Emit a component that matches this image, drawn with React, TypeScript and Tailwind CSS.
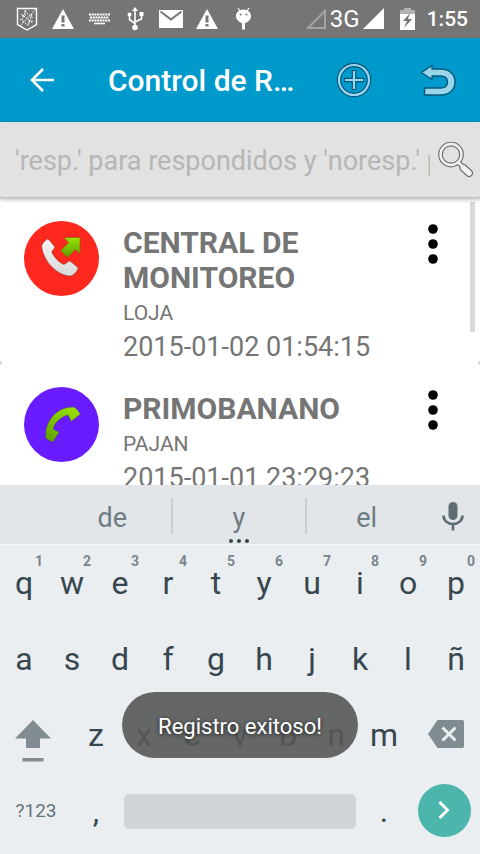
import React from "react";

const roboto = "font-['Roboto','Noto_Sans',sans-serif]";

function ShieldIcon() {
  return (
    <svg width="22" height="24" viewBox="0 0 22 24" fill="none" stroke="#fff" aria-hidden="true">
      <path d="M1.500 1.500h19v16L11 23l-9.500-5.500z" strokeWidth="1.400" />
      <path d="M5 7l12 9M8 4l9 7M4 12l8 6M20 2L4 19M10 3L6 13M16 7l-4 12M6 9l4-1M12 15l5-1" strokeWidth="1" strokeDasharray="2 1" />
    </svg>
  );
}

function WarningIcon() {
  return (
    <svg width="24" height="22" viewBox="0 0 24 22" aria-hidden="true">
      <path d="M12 1L23 21H1z" fill="#fff" />
      <path d="M10.500 7.500h3v7h-3zM10.500 16h3v2.500h-3z" fill="#757575" />
    </svg>
  );
}

function KeyboardIcon() {
  return (
    <svg width="21" height="12" viewBox="0 0 21 12" stroke="#fff" aria-hidden="true">
      <path d="M0 1.500h21M0 7.500h21" strokeWidth="2" strokeDasharray="2 0.700" />
      <path d="M1 4.500h19" strokeWidth="2" strokeDasharray="2 0.700" />
      <path d="M5 10.500h11" strokeWidth="1.600" />
    </svg>
  );
}

function UsbIcon() {
  return (
    <svg width="17" height="24" viewBox="0 0 17 24" aria-hidden="true">
      <path d="M8 3v17M2.500 8v4.500L8 16.500M14.500 8v4L8 15" fill="none" stroke="#fff" strokeWidth="1.600" />
      <path d="M8 0l3 4H5zM12.500 5h4v4h-4z" fill="#fff" />
      <circle cx="2.500" cy="7.500" r="2" fill="#fff" />
      <circle cx="8" cy="20.500" r="2.800" fill="#fff" />
    </svg>
  );
}

function MailIcon() {
  return (
    <svg width="24" height="18" viewBox="0 0 24 18" aria-hidden="true">
      <path d="M0 0h24v18H0z" fill="#fff" />
      <path d="M1.500 1.500L12 9.500l10.500-8" fill="none" stroke="#757575" strokeWidth="2" />
    </svg>
  );
}

function AndroidIcon() {
  return (
    <svg width="17" height="24" viewBox="0 0 17 24" aria-hidden="true">
      <path d="M3 1l2 3M14 1l-2 3" stroke="#fff" strokeWidth="1.200" />
      <path d="M8.500 2.500c4.500 0 7.500 3 7.500 6.500 0 4-3.500 6.500-6 7v6.500h-3V16C4.500 15.500 1 13 1 9c0-3.500 3-6.500 7.500-6.500z" fill="#fff" />
      <circle cx="5.500" cy="7.500" r="1" fill="#757575" />
      <circle cx="11.500" cy="7.500" r="1" fill="#757575" />
    </svg>
  );
}

function StatusBar() {
  return (
    <div className="flex h-[38px] shrink-0 items-center justify-between bg-[#757575] pl-[9px] pr-3 text-white">
      <div className="flex">
        {[ShieldIcon, WarningIcon, KeyboardIcon, UsbIcon, MailIcon, WarningIcon, AndroidIcon].map((Icon, i) => (
          <span key={i} className="flex w-9 items-center justify-center">
            <Icon />
          </span>
        ))}
      </div>
      <div className="flex items-center">
        <svg width="22" height="22" viewBox="0 0 22 22" aria-hidden="true">
          <path d="M20 3v17H3z" fill="none" stroke="#a3a3a3" strokeWidth="2" />
        </svg>
        <span className="px-[3px] text-2xl leading-6">3G</span>
        <svg width="21" height="22" viewBox="0 0 21 22" aria-hidden="true">
          <path d="M21 0v21H0z" fill="#fff" />
        </svg>
        <svg className="mx-3 ml-4" width="15" height="22" viewBox="0 0 15 22" aria-hidden="true">
          <path d="M4 0h7v2h4v4H0V2h4z" fill="#b3b3b3" />
          <path d="M0 6h15v16H0z" fill="#fff" />
          <path d="M10 5L3 13h4l-3 7 8-9H8z" fill="#757575" />
        </svg>
        <span className="text-[21px] leading-6 font-medium">1:55</span>
      </div>
    </div>
  );
}

function Toolbar() {
  return (
    <header className="flex h-[84px] shrink-0 items-center bg-[#0099cc] text-white">
      <button type="button" aria-label="Atrás" className="flex h-full w-[84px] items-center justify-center">
        <svg width="24" height="24" viewBox="0 0 24 24" fill="none" stroke="#fff" strokeWidth="2.600">
          <path d="M24 12H2M13 1L2 12l11 11" />
        </svg>
      </button>
      <h1 className="min-w-0 flex-1 truncate pt-0.5 pl-6 text-3xl font-medium">Control de R…</h1>
      <button type="button" aria-label="Agregar" className="flex h-full w-[84px] items-center justify-center">
        <svg width="36" height="36" viewBox="0 0 36 36" fill="none">
          <circle cx="18" cy="18" r="15" stroke="#07577a" strokeWidth="4.600" />
          <circle cx="18" cy="18" r="15" stroke="#99d6eb" strokeWidth="2.200" />
          <path d="M18 8v20M8 18h20" stroke="#07577a" strokeWidth="4.600" />
          <path d="M18 9v18M9 18h18" stroke="#99d6eb" strokeWidth="2.200" />
        </svg>
      </button>
      <button type="button" aria-label="Deshacer" className="flex h-full w-[84px] items-center justify-center">
        <svg width="36" height="32" viewBox="0 0 36 32">
          <path
            d="M1.500 8.500L12 1.500V5h8.500c8.500 0 14.500 5 14.500 13s-6 13-14.500 13h-16v-7h16c4.500 0 7-2.500 7-6s-2.500-6-7-6H12v3.500z"
            fill="#99d6eb"
            stroke="#07577a"
            strokeWidth="1.400"
            strokeLinejoin="round"
          />
        </svg>
      </button>
    </header>
  );
}

function SearchBar() {
  return (
    <form
      className="z-10 flex h-[75px] shrink-0 items-center gap-2 bg-[#e2e2e2] pr-1.5 pl-[15px] shadow-[0_2px_5px_rgba(0,0,0,0.35)]"
      onSubmit={(e) => e.preventDefault()}
    >
      <input
        type="text"
        aria-label="Buscar"
        placeholder="'resp.' para respondidos y 'noresp.' para no respondidos"
        className="h-full min-w-0 flex-1 bg-transparent pt-0.5 text-[27px] text-[#757575] outline-none placeholder:text-[#b6b6b6]"
      />
      <button type="submit" aria-label="Buscar">
        <svg width="36" height="36" viewBox="0 0 36 36" fill="none">
          <path d="M20 20l5 5" stroke="#707070" strokeWidth="5" />
          <path d="M25.500 26l5.500 5" stroke="#707070" strokeWidth="8" strokeLinecap="round" />
          <circle cx="13" cy="12.500" r="10.500" stroke="#707070" strokeWidth="4.800" />
          <circle cx="13" cy="12.500" r="10.500" stroke="#f2f2f2" strokeWidth="2.400" />
          <path d="M20.500 20.500l4 4" stroke="#f2f2f2" strokeWidth="2.600" />
          <path d="M25.500 26l5.500 5" stroke="#f2f2f2" strokeWidth="5.600" strokeLinecap="round" />
        </svg>
      </button>
    </form>
  );
}

function OutgoingCall() {
  return (
    <svg width="75" height="75" viewBox="0 0 75 75" className="shrink-0" aria-hidden="true">
      <defs>
        <linearGradient id="handset" x1="0" y1="0" x2="0" y2="1">
          <stop offset="0" stopColor="#f5f5f5" />
          <stop offset="1" stopColor="#d9d9d9" />
        </linearGradient>
        <linearGradient id="arrow" x1="0" y1="0" x2="0" y2="1">
          <stop offset="0" stopColor="#99e600" />
          <stop offset="1" stopColor="#5c9900" />
        </linearGradient>
      </defs>
      <circle cx="37.500" cy="37.500" r="37.500" fill="#ff281e" />
      <path
        d="M17.700 24.500C18.500 22 22 18.500 24 17.800L30.700 25.500C31 28 27.500 29 28 31.500C30 36 35 41.500 39.500 43.300C42 43.500 43.500 40 46 40L54 46.500C54.500 49 50 54.500 46.500 55C40 55.500 31 50 26 44C21 38 17.500 30 17.700 24.500Z"
        fill="url(#handset)"
        stroke="#8f2b26"
        strokeWidth="0.600"
      />
      <path d="M40 16.500h16V33l-4.500-4.500-8.200 8-6.800-6.800 8-8z" fill="url(#arrow)" stroke="#8a4a00" strokeWidth="0.500" />
    </svg>
  );
}

function AnsweredCall() {
  return (
    <svg width="75" height="75" viewBox="0 0 75 75" className="shrink-0" aria-hidden="true">
      <defs>
        <linearGradient id="answered" x1="0.800" y1="0" x2="0.200" y2="1">
          <stop offset="0" stopColor="#99e000" />
          <stop offset="0.500" stopColor="#80c400" />
          <stop offset="1" stopColor="#629e00" />
        </linearGradient>
      </defs>
      <circle cx="37.500" cy="37.500" r="37.500" fill="#681cff" />
      <path
        d="M21.500 50.500C20.500 43 24 34 29.500 28C35 22.500 42.500 19.500 50 20C51.500 20.500 56.500 25.500 56.200 27.500L47.700 34.200C45.500 33.500 45.500 29 43.500 28.300C37 30 31 35.500 29.300 41.500C30 43.500 34.500 43.500 35.200 45.500L29 55C26.500 55 22.500 52.500 21.500 50.500Z"
        fill="url(#answered)"
        stroke="#40309a"
        strokeWidth="0.600"
      />
    </svg>
  );
}

type Entry = { name: string; place: string; date: string; Icon: () => React.ReactElement };

const entries: Entry[] = [
  { name: "CENTRAL DE MONITOREO", place: "LOJA", date: "2015-01-02 01:54:15", Icon: OutgoingCall },
  { name: "PRIMOBANANO", place: "PAJAN", date: "2015-01-01 23:29:23", Icon: AnsweredCall },
];

function EntryCard({ name, place, date, Icon }: Entry) {
  return (
    <li className="flex items-start gap-6 rounded-[3px] bg-white pr-[39px] pl-6 text-[#757575]">
      <div className="pt-6">
        <Icon />
      </div>
      <div className="min-w-0 flex-1 pt-7">
        <h2 className="text-3xl leading-[35px] font-bold">{name}</h2>
        <p className="text-[21px] leading-[37px]">{place}</p>
        <p className="text-[27px] leading-[31px] whitespace-nowrap">{date}</p>
      </div>
      <button type="button" aria-label="Opciones" className="pt-6">
        <svg width="16" height="45" viewBox="0 0 16 45" fill="#000">
          <circle cx="8" cy="8" r="4.800" />
          <circle cx="8" cy="23" r="4.800" />
          <circle cx="8" cy="38" r="4.800" />
        </svg>
      </button>
    </li>
  );
}

function SuggestionBar() {
  return (
    <div className="flex h-[60px] shrink-0 items-center border-b border-[#f5f7f8] bg-[#e2e6e9] pt-0.5 pl-[54px] text-[27px] text-[#6f7d83]">
      <div className="grid flex-1 grid-cols-[15fr_17fr_15fr] items-center">
        <button type="button" className="h-9 border-r-2 border-[#c9cdd0] pt-1 leading-8">de</button>
        <button type="button" className="relative h-9 border-r-2 border-[#c9cdd0] pt-1 leading-8">
          y
          <span className="absolute inset-x-0 top-[41px] flex justify-center gap-1">
            <span className="size-1 rounded-full bg-[#37474f]" />
            <span className="size-1 rounded-full bg-[#37474f]" />
            <span className="size-1 rounded-full bg-[#37474f]" />
          </span>
        </button>
        <button type="button" className="h-9 pt-1 leading-8">el</button>
      </div>
      <button type="button" aria-label="Voz" className="flex w-[54px] justify-center">
        <svg width="22" height="30" viewBox="0 0 22 30">
          <rect x="6.500" y="1" width="9" height="18" rx="4.500" fill="#5f6d73" />
          <path d="M1.500 14.500c0 5 4 8.500 9.500 8.500s9.500-3.500 9.500-8.500M11 23v6.500" fill="none" stroke="#5f6d73" strokeWidth="2.600" />
        </svg>
      </button>
    </div>
  );
}

const rowTop = ["q", "w", "e", "r", "t", "y", "u", "i", "o", "p"];
const rowHome = ["a", "s", "d", "f", "g", "h", "j", "k", "l", "ñ"];
const rowBottom = ["z", "x", "c", "v", "b", "n", "m"];

function Key({ label, hint }: { label: string; hint?: string }) {
  return (
    <button type="button" className="relative col-span-2 flex h-[76px] items-center justify-center text-[32px] text-[#37474f]">
      {label}
      {hint && <span className="absolute top-[9px] right-[5px] text-sm leading-[14px] font-bold text-[#78868b]">{hint}</span>}
    </button>
  );
}

function Keyboard() {
  return (
    <div className="grid shrink-0 grid-cols-20 bg-[#ebeef1] pb-[5px]">
      {rowTop.map((k, i) => (
        <Key key={k} label={k} hint={String((i + 1) % 10)} />
      ))}
      {rowHome.map((k) => (
        <Key key={k} label={k} />
      ))}
      <button type="button" aria-label="Mayúsculas" className="col-span-3 flex items-center justify-center pr-1.5">
        <svg width="36" height="54" viewBox="0 0 36 54" fill="#808c91">
          <path d="M18 12l18 18.500H25V40H11v-9.500H0zM7.500 50h21v3.500h-21z" />
        </svg>
      </button>
      {rowBottom.map((k) => (
        <Key key={k} label={k} />
      ))}
      <button type="button" aria-label="Borrar" className="col-span-3 flex items-center justify-center pb-0.5 pl-1">
        <svg width="36" height="28" viewBox="0 0 36 28">
          <path d="M9.500 0H34a2 2 0 0 1 2 2v24a2 2 0 0 1-2 2H9.500L0 14z" fill="#808c91" />
          <path d="M14.500 7.500l13 13M27.500 7.500l-13 13" stroke="#ebeef1" strokeWidth="3" />
        </svg>
      </button>
      <button type="button" className="col-span-3 text-[19px] text-[#65747a]">?123</button>
      <Key label="," />
      <button type="button" aria-label="Espacio" className="col-span-10 mx-1 h-[35px] self-center rounded-[5px] bg-[#d0d5d8]" />
      <Key label="." />
      <div className="col-span-3 flex items-center justify-center pb-0.5">
        <button type="button" aria-label="Siguiente" className="flex size-[53px] items-center justify-center rounded-full bg-[#4db6ac]">
          <svg width="12" height="20" viewBox="0 0 12 20" fill="none" stroke="#fff" strokeWidth="3">
            <path d="M1.500 2l8 8-8 8" />
          </svg>
        </button>
      </div>
    </div>
  );
}

export default function App() {
  return (
    <div className={`${roboto} relative flex h-screen flex-col overflow-hidden`}>
      <StatusBar />
      <Toolbar />
      <SearchBar />
      <main className="relative min-h-0 flex-1 overflow-hidden bg-[#bdbdbd]">
        <ul>
          {entries.map((entry) => (
            <EntryCard key={entry.name} {...entry} />
          ))}
        </ul>
        <div className="absolute top-[5px] right-[5px] h-[130px] w-[5px] bg-[#dadada]" />
      </main>
      <SuggestionBar />
      <Keyboard />
      <div className="pointer-events-none absolute inset-x-0 bottom-24 flex justify-center">
        <p
          role="status"
          className="rounded-full bg-[#565656]/90 px-9 pt-5 pb-4 text-[22px] leading-[30px] text-white [text-shadow:0_1px_4px_rgba(0,0,0,0.7)]"
        >
          Registro exitoso!
        </p>
      </div>
    </div>
  );
}
